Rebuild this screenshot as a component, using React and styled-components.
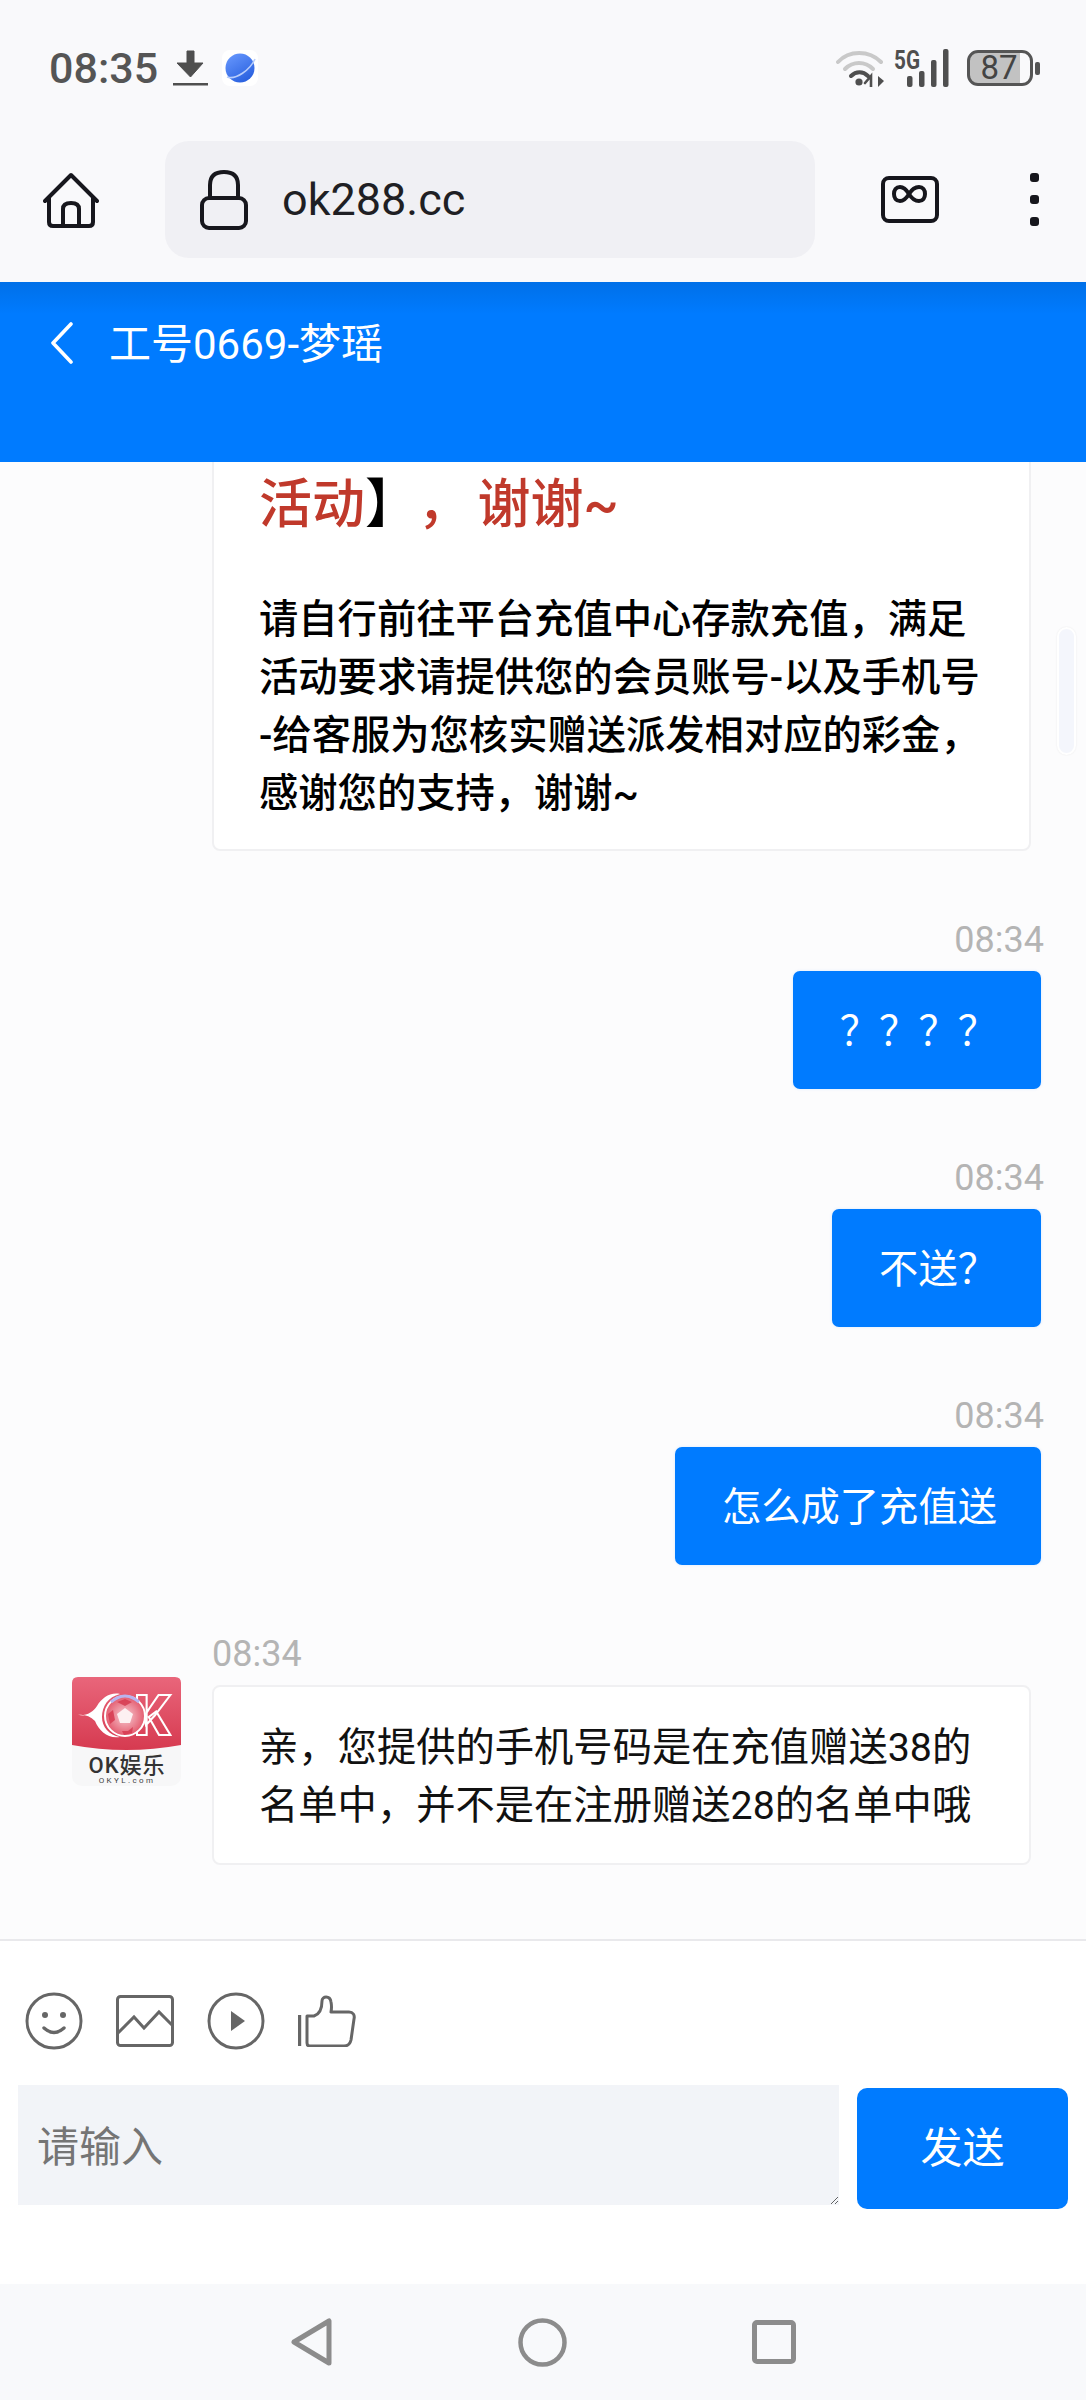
import React from "react";
import styled, { createGlobalStyle } from "styled-components";

const FONT = `Roboto, "Noto Sans CJK SC", sans-serif`;

const Global = createGlobalStyle`
  html, body { margin: 0; padding: 0; background: #fcfcfd; }
  * { box-sizing: border-box; }
  body { font-family: ${FONT}; }
`;

const Page = styled.div`
  width: 1086px;
  height: 2400px;
  display: flex;
  flex-direction: column;
  overflow: hidden;
  background: #fcfcfd;
`;

/* ---------- system status bar ---------- */
const StatusBar = styled.div`
  height: 100px;
  flex: none;
  background: #f9f9fb;
  display: flex;
  justify-content: space-between;
  align-items: flex-start;
  padding: 48px 46px 0 49px;
`;
const StatusGroup = styled.div`
  display: flex;
  align-items: center;
  height: 40px;
`;
const Clock = styled.span`
  font: 500 43px/40px Roboto, sans-serif;
  color: #555;
  margin-right: 15px;
`;
const PlanetTile = styled.span`
  width: 36px;
  height: 36px;
  margin-left: 14px;
  border-radius: 8px;
  background: #fff;
  display: flex;
`;
const Battery = styled.div`
  width: 66px;
  height: 36px;
  margin-left: 15px;
  border: 3.5px solid #555;
  border-radius: 11px;
  background: linear-gradient(90deg, #c2c2c2 80%, transparent 80%);
  background-origin: border-box;
  font: 400 33px/29px Roboto, sans-serif;
  color: #444;
  display: flex;
  justify-content: center;
  padding-right: 2px;
`;
const BatteryNub = styled.span`
  width: 5px;
  height: 13px;
  margin-left: 2px;
  border-radius: 2px;
  background: #555;
`;

/* ---------- browser toolbar ---------- */
const Toolbar = styled.div`
  height: 182px;
  flex: none;
  background: #f9f9fb;
  padding: 41px 0 0 43px;
`;
const ToolbarRow = styled.div`
  height: 117px;
  display: flex;
  align-items: center;
  gap: 66px;
`;
const UrlBox = styled.div`
  width: 650px;
  height: 117px;
  border-radius: 24px;
  background: #f0f0f4;
  display: flex;
  align-items: center;
  gap: 34px;
  padding-left: 35px;
`;
const UrlText = styled.span`
  font: 400 45px/60px Roboto, sans-serif;
  color: #1f1f24;
`;
const MenuDots = styled.div`
  margin-left: 25px;
  display: flex;
  flex-direction: column;
  gap: 13px;
`;
const MenuDot = styled.span`
  width: 9px;
  height: 9px;
  border-radius: 3px;
  background: #16161c;
`;

/* ---------- chat header ---------- */
const ChatHeader = styled.header`
  height: 180px;
  flex: none;
  background: linear-gradient(#0070e8, #007bff 32px);
  color: #fff;
  display: flex;
  align-items: flex-start;
  gap: 35px;
  padding: 40px 0 0 50px;
`;
const ChatTitle = styled.h1`
  margin: 0;
  font: 400 42px/46px ${FONT};
`;

/* ---------- message list ---------- */
const ChatArea = styled.main`
  position: relative;
  flex: 1;
  min-height: 0;
  overflow: hidden;
  display: flex;
  flex-direction: column;
  justify-content: flex-end;
  gap: 67px;
  padding-bottom: 74px;
`;
const ScrollThumb = styled.div`
  position: absolute;
  top: 165px;
  right: 10px;
  width: 19px;
  height: 128px;
  border-radius: 10px;
  background: #f4f6fc;
  border: 2px solid #fff;
  box-shadow: 0 0 2px rgba(0, 0, 0, 0.08);
`;
const OutgoingRow = styled.section`
  flex: none;
  display: flex;
  flex-direction: column;
  align-items: flex-end;
  padding-right: 45px;
`;
const IncomingRow = styled.section`
  flex: none;
  display: flex;
  gap: 31px;
  padding-left: 72px;
`;
const AvatarSlot = styled.div`
  width: 109px;
  flex: none;
  padding-top: 45px;
`;
const IncomingBody = styled.div`
  width: 819px;
  flex: none;
`;
const Time = styled.div`
  font: 400 36px/40px Roboto, sans-serif;
  color: #b4b4b4;
  padding-top: 2px;
  margin-bottom: 11px;
  margin-right: ${(p) => (p.$right ? "-3px" : "0")};
`;
const Bubble = styled.div`
  background: #007bff;
  color: #fff;
  border-radius: 7px;
  padding: 32px 44px 28px 47px;
  font: 400 39.3px/58px ${FONT};
  box-shadow: 0 0 3px rgba(0, 123, 255, 0.15);
`;
const Card = styled.div`
  background: #fff;
  border: 2px solid #f0f0f2;
  border-radius: 8px;
  padding: ${(p) => (p.$clipped ? "100px 44px 26px 45px" : "32px 44px 28px 45px")};
  font: 400 39.3px/58px ${FONT};
  color: #111;
`;
const PromoTitle = styled.p`
  margin: 0 0 47px;
  font: 500 53px/78px ${FONT};
  color: #c0392b;
`;
const Bracket = styled.span`
  color: #000;
  margin-right: 26px;
`;
const TitleComma = styled.span`
  margin-right: 7px;
`;
const PromoText = styled.p`
  margin: 0;
  font-weight: 500;
  color: #000;
  line-break: anywhere;
`;

/* ---------- composer ---------- */
const Composer = styled.footer`
  height: 345px;
  flex: none;
  background: #fff;
  border-top: 2px solid #e9e9ec;
  padding-top: 51px;
`;
const ActionRow = styled.div`
  display: flex;
  align-items: center;
  gap: 33px;
  height: 58px;
  padding-left: 25px;
  margin-bottom: 35px;
`;
const InputRow = styled.div`
  display: flex;
  align-items: flex-start;
  gap: 18px;
  padding-left: 18px;
`;
const MessageInput = styled.textarea`
  width: 821px;
  height: 120px;
  border: 0;
  border-radius: 0;
  outline: 0;
  background: #f2f4f8;
  padding: 34px 19px 24px;
  font: 400 42px/58px ${FONT};
  color: #333;
  resize: both;
  &::placeholder { color: #757575; opacity: 1; }
`;
const SendButton = styled.button`
  width: 211px;
  height: 121px;
  margin-top: 3px;
  border: 0;
  border-radius: 10px;
  background: #007bff;
  color: #fff;
  font: 400 42px/58px ${FONT};
`;

/* ---------- system nav bar ---------- */
const NavBar = styled.nav`
  height: 116px;
  flex: none;
  background: #f8f9fb;
  display: flex;
  align-items: center;
  justify-content: center;
  gap: 185px;
`;
const NavSquare = styled.span`
  width: 44px;
  height: 44px;
  border: 5px solid #8c8c8c;
  border-radius: 5px;
`;

const Ico = styled.svg`
  display: block;
  flex: none;
`;

const HomeIcon = () => (
  <Ico width="56" height="56" viewBox="0 0 56 56" fill="none" stroke="#17171d" strokeWidth="4" strokeLinecap="round" strokeLinejoin="round">
    <path d="M2 29 L28 3 L54 29" />
    <path d="M6 26 V50 Q6 54 10 54 H46 Q50 54 50 50 V26" />
    <path d="M20 54 V37 Q20 31 28 31 Q36 31 36 37 V54" />
  </Ico>
);
const LockIcon = () => (
  <Ico width="48" height="60" viewBox="0 0 48 60" fill="none" stroke="#17171d" strokeWidth="4">
    <rect x="2" y="28" width="44" height="30" rx="7" />
    <path d="M10 28 V15 Q10 2 24 2 Q38 2 38 15 V28" />
  </Ico>
);
const InfinityBoxIcon = () => (
  <Ico width="58" height="47" viewBox="0 0 58 47" fill="none" stroke="#16161c" strokeWidth="4">
    <rect x="2" y="2" width="54" height="43" rx="6" />
    <path d="M28 18 C25 13 22 11 19 11 C15 11 13 14 13 18 C13 22 15 25 19 25 C22 25 25 23 28 18 C31 13 34 11 38 11 C42 11 44 14 44 18 C44 22 42 25 38 25 C34 25 31 23 28 18 Z" />
  </Ico>
);
const DownloadIcon = () => (
  <Ico width="35" height="36" viewBox="0 0 35 36">
    <path d="M14 1 H21 V13 H30 L17.5 27 L4 13 H14 Z" fill="#4f4f4f" strokeLinejoin="round" stroke="#4f4f4f" strokeWidth="1" />
    <rect x="0" y="33" width="35" height="2.5" fill="#4f4f4f" />
  </Ico>
);
const PlanetIcon = () => (
  <Ico width="36" height="36" viewBox="0 0 36 36">
    <defs>
      <linearGradient id="planet" x1="0" y1="0" x2="0.6" y2="1">
        <stop offset="0" stopColor="#6b9bff" />
        <stop offset="1" stopColor="#2b62e0" />
      </linearGradient>
    </defs>
    <circle cx="18" cy="18" r="14.5" fill="url(#planet)" />
    <path d="M5 27 C14 30 28 20 33 9" fill="none" stroke="#b8cdfb" strokeWidth="1.6" />
  </Ico>
);
const WifiIcon = () => (
  <Ico width="48" height="38" viewBox="0 0 48 38" fill="none" strokeLinecap="round">
    <path d="M2 13 C13 1 33 1 45 13" stroke="#c9c9c9" strokeWidth="4" />
    <path d="M9 20 C17 12 29 12 37 20" stroke="#c9c9c9" strokeWidth="4" />
    <path d="M15 27 C20 22 27 22 32 27" stroke="#4f4f4f" strokeWidth="4" />
    <circle cx="23" cy="33" r="3.6" fill="#4f4f4f" />
    <path d="M35 38 V27 L29 34" stroke="#4f4f4f" strokeWidth="2.6" fill="none" />
    <path d="M42 27 V38 L48 32 L42 27 Z" fill="#4f4f4f" />
  </Ico>
);
const SignalIcon = () => (
  <Ico width="58" height="38" viewBox="0 0 58 38" style={{ marginLeft: 10 }}>
    <text x="0" y="20" fontFamily="Roboto, sans-serif" fontWeight="700" fontSize="26" fill="#4f4f4f" textLength="26" lengthAdjust="spacingAndGlyphs">5G</text>
    <rect x="13" y="27" width="5.5" height="11" rx="2" fill="#4f4f4f" />
    <rect x="25" y="22" width="5.5" height="16" rx="2" fill="#4f4f4f" />
    <rect x="37" y="11" width="5.5" height="27" rx="2" fill="#4f4f4f" />
    <rect x="49" y="0" width="5.5" height="38" rx="2" fill="#4f4f4f" />
  </Ico>
);
const BackIcon = () => (
  <Ico width="24" height="42" viewBox="0 0 24 42" fill="none" stroke="#fff" strokeWidth="3.6" strokeLinecap="round" strokeLinejoin="round">
    <path d="M21 2 L3 21 L21 40" />
  </Ico>
);
const SmileIcon = () => (
  <Ico width="58" height="58" viewBox="0 0 58 58" fill="none" stroke="#666" strokeWidth="3">
    <circle cx="29" cy="29" r="27" />
    <circle cx="20" cy="23" r="3" fill="#666" stroke="none" />
    <circle cx="38" cy="23" r="3" fill="#666" stroke="none" />
    <path d="M19 36 Q29 45 39 36" strokeLinecap="round" strokeWidth="3.4" />
  </Ico>
);
const ImageIcon = () => (
  <Ico width="58" height="52" viewBox="0 0 58 52" fill="none" stroke="#666" strokeWidth="3">
    <rect x="1.5" y="1.5" width="55" height="49" rx="3" />
    <path d="M2 38 L18 22 L28 33 L43 17 L56 30" />
  </Ico>
);
const PlayIcon = () => (
  <Ico width="58" height="58" viewBox="0 0 58 58" fill="none" stroke="#666" strokeWidth="3">
    <circle cx="29" cy="29" r="27" />
    <path d="M24 19 L38 29 L24 39 Z" fill="#666" stroke="none" />
  </Ico>
);
const ThumbIcon = () => (
  <Ico width="58" height="52" viewBox="0 0 58 52" fill="none" stroke="#666" strokeWidth="3" strokeLinejoin="round">
    <path d="M1.5 20 V51" strokeWidth="3.4" />
    <path d="M9 21 H16 C22 19 24 12 24 6 C24 1 32 0 33 7 C34 12 33 17 33 17 H51 C55 17 57 20 56 24 L53 45 C52 49 50 51 46 51 H12 C10 51 9 50 9 48 Z" />
  </Ico>
);
const NavBackIcon = () => (
  <Ico width="42" height="48" viewBox="0 0 42 48" fill="none" stroke="#8c8c8c" strokeWidth="5" strokeLinejoin="round">
    <path d="M38 3 V45 L3 24 Z" />
  </Ico>
);
const NavHomeIcon = () => (
  <Ico width="49" height="49" viewBox="0 0 49 49" fill="none" stroke="#8c8c8c" strokeWidth="4.5">
    <circle cx="24.5" cy="24.5" r="22" />
  </Ico>
);
const BrandAvatar = () => (
  <Ico width="109" height="109" viewBox="0 0 109 109">
    <defs>
      <linearGradient id="brand" x1="0" y1="0" x2="0" y2="1">
        <stop offset="0" stopColor="#e9667b" />
        <stop offset="1" stopColor="#d63a50" />
      </linearGradient>
      <radialGradient id="ball" cx="0.5" cy="0.5" r="0.55">
        <stop offset="0" stopColor="#f7ccd3" />
        <stop offset="1" stopColor="#e24e63" />
      </radialGradient>
    </defs>
    <rect width="109" height="109" rx="10" fill="#f7f7f8" />
    <path d="M0 6 Q0 0 6 0 H103 Q109 0 109 6 V68 Q54 78 0 68 Z" fill="url(#brand)" />
    <path d="M6 38 C15 39 21 35 25 29 C30 21 38 15 48 17 C36 20 30 29 30 40 C30 50 37 58 48 60 C36 62 27 54 23 44 C18 39 12 37 6 38 Z" fill="#fff" />
    <text x="62" y="58" fontFamily="Roboto, sans-serif" fontWeight="900" fontSize="56" fill="none" stroke="#fff" strokeWidth="2">K</text>
    <circle cx="53" cy="39" r="20" fill="url(#ball)" stroke="#fff" strokeWidth="2" />
    <path d="M39 25 Q53 13 67 25" fill="none" stroke="#b9b3ee" strokeWidth="3" />
    <path d="M53 31 L61 37 L58 46 L48 46 L45 37 Z" fill="#fdf0f2" />
    <path d="M45 25 L53 22 L60 25 L53 29 Z M36 37 L41 33 L43 43 L38 47 Z M50 54 L56 54 L61 50 L60 56 L52 58 Z" fill="#d63a50" opacity="0.85" />
    <text x="55" y="96" textAnchor="middle" fontFamily="Roboto, 'Noto Sans CJK SC', sans-serif" fontWeight="500" fontSize="22" letterSpacing="1" fill="#333">OK娱乐</text>
    <text x="55" y="106" textAnchor="middle" fontFamily="Roboto, sans-serif" fontSize="8" letterSpacing="2.4" fill="#444">OKYL.com</text>
  </Ico>
);

const Outgoing = ({ children }) => (
  <OutgoingRow>
    <Time $right>08:34</Time>
    <Bubble>{children}</Bubble>
  </OutgoingRow>
);

export default function App() {
  return (
    <Page>
      <Global />
      <StatusBar>
        <StatusGroup>
          <Clock>08:35</Clock>
          <DownloadIcon />
          <PlanetTile><PlanetIcon /></PlanetTile>
        </StatusGroup>
        <StatusGroup>
          <WifiIcon />
          <SignalIcon />
          <Battery>87</Battery>
          <BatteryNub />
        </StatusGroup>
      </StatusBar>

      <Toolbar>
        <ToolbarRow>
          <HomeIcon />
          <UrlBox>
            <LockIcon />
            <UrlText>ok288.cc</UrlText>
          </UrlBox>
          <InfinityBoxIcon />
          <MenuDots>
            <MenuDot />
            <MenuDot />
            <MenuDot />
          </MenuDots>
        </ToolbarRow>
      </Toolbar>

      <ChatHeader>
        <BackIcon />
        <ChatTitle>工号0669-梦瑶</ChatTitle>
      </ChatHeader>

      <ChatArea>
        <ScrollThumb />
        <IncomingRow>
          <AvatarSlot />
          <IncomingBody>
            <Card $clipped>
              <PromoTitle>活动<Bracket>】</Bracket><TitleComma>，</TitleComma>谢谢~</PromoTitle>
              <PromoText>请自行前往平台充值中心存款充值，满足活动要求请提供您的会员账号-以及手机号-给客服为您核实赠送派发相对应的彩金，感谢您的支持，谢谢~</PromoText>
            </Card>
          </IncomingBody>
        </IncomingRow>
        <Outgoing>？？？？</Outgoing>
        <Outgoing>不送？</Outgoing>
        <Outgoing>怎么成了充值送</Outgoing>
        <IncomingRow>
          <AvatarSlot><BrandAvatar /></AvatarSlot>
          <IncomingBody>
            <Time>08:34</Time>
            <Card>亲，您提供的手机号码是在充值赠送38的名单中，并不是在注册赠送28的名单中哦</Card>
          </IncomingBody>
        </IncomingRow>
      </ChatArea>

      <Composer>
        <ActionRow>
          <SmileIcon />
          <ImageIcon />
          <PlayIcon />
          <ThumbIcon />
        </ActionRow>
        <InputRow>
          <MessageInput placeholder="请输入" />
          <SendButton>发送</SendButton>
        </InputRow>
      </Composer>

      <NavBar>
        <NavBackIcon />
        <NavHomeIcon />
        <NavSquare />
      </NavBar>
    </Page>
  );
}
